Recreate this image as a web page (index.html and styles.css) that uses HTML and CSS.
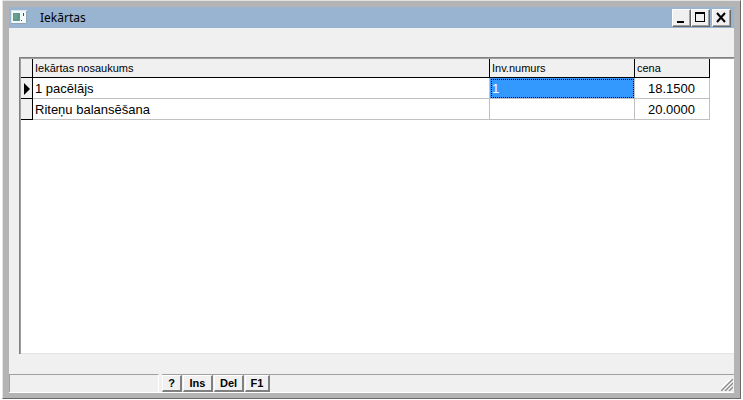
FILE: index.html
```
<!DOCTYPE html>
<html lang="lv">
<head>
    <meta charset="UTF-8">
    <meta name="viewport" content="width=device-width, initial-scale=1.0">
    <title>Iekārtas</title>
    <link rel="stylesheet" href="styles.css">
</head>
<body>
    <main class="window">
        <header class="titlebar">
            <svg class="app-icon" width="16" height="14" viewBox="0 0 16 14" aria-hidden="true">
                <rect x="0.5" y="0.5" width="15" height="13" fill="#f4faf8" stroke="#dce8ee"/>
                <path d="M0 13.5h15.5V1" fill="none" stroke="#8fa5b5"/>
                <rect x="2" y="3" width="7" height="8" fill="#5d9690"/>
                <rect x="3" y="4" width="3" height="5" fill="#6ba38b"/>
                <path d="M12 3h1v3h-1zM10 10h1v1h-1z" fill="#34566c"/>
            </svg>
            <h1>Iekārtas</h1>
            <button type="button" class="win-btn" aria-label="Minimize">
                <svg width="17" height="15" viewBox="0 0 17 15"><path d="M4 11h7v2H4z"/></svg>
            </button>
            <button type="button" class="win-btn" aria-label="Maximize">
                <svg width="17" height="15" viewBox="0 0 17 15"><path fill-rule="evenodd" d="M3 2h10v10H3zM4 4v7h8V4z"/></svg>
            </button>
            <button type="button" class="win-btn close" aria-label="Close">
                <svg width="17" height="15" viewBox="0 0 17 15"><path d="M4 3l8 9M12 3l-8 9" stroke="#000" stroke-width="2"/></svg>
            </button>
        </header>

        <section class="content">
            <table class="grid">
                <colgroup>
                    <col class="col-mark">
                    <col>
                    <col class="col-inv">
                    <col class="col-price">
                </colgroup>
                <thead>
                    <tr>
                        <th class="mark"></th>
                        <th scope="col">Iekārtas nosaukums</th>
                        <th scope="col">Inv.numurs</th>
                        <th scope="col">cena</th>
                    </tr>
                </thead>
                <tbody>
                    <tr>
                        <td class="mark"><svg width="7" height="12" viewBox="0 0 7 12"><path d="M1 0l6 6-6 6z"/></svg></td>
                        <td>1 pacēlājs</td>
                        <td class="selected">1</td>
                        <td class="price">18.1500</td>
                    </tr>
                    <tr>
                        <td class="mark"></td>
                        <td>Riteņu balansēšana</td>
                        <td></td>
                        <td class="price">20.0000</td>
                    </tr>
                </tbody>
            </table>
        </section>

        <footer class="statusbar">
            <div class="status-panel"></div>
            <div class="tools">
                <button type="button" class="help">?</button>
                <button type="button" class="edit">Ins</button>
                <button type="button" class="edit">Del</button>
                <button type="button">F1</button>
            </div>
            <div class="status-rest">
                <svg width="12" height="12" viewBox="0 0 12 12" aria-hidden="true">
                    <path d="M0 11L11 0M4 11l7-7M8 11l3-3" stroke="#fff" stroke-width="3"/>
                    <path d="M0 12L12 0M4 12l8-8M8 12l4-4" stroke="#8c8c8c" stroke-width="1.5"/>
                </svg>
            </div>
        </footer>
    </main>
</body>
</html>
```
FILE: styles.css
```
* { box-sizing: border-box; }
body {
    margin: 0;
    padding: 0 2px 1px;
    height: 100vh;
    display: flex;
    background: #fff;
    font-family: "Liberation Sans", Arial, sans-serif;
    color: #000;
}
button { font-family: inherit; color: #000; padding: 0; }

/* window frame */
.window {
    flex: 1;
    display: flex;
    flex-direction: column;
    padding: 6px 6px 5px;
    background: #b4b4b4;
    border: 1px solid #e3e3e3;
    border-right-color: #696969;
    border-bottom-color: #696969;
}
.titlebar {
    display: flex;
    align-items: center;
    height: 21px;
    padding: 0 3px 0 2px;
    background: #99b4d1;
}
.app-icon { margin-bottom: 2px; }
.titlebar h1 {
    flex: 1;
    margin: 0 0 0 13px;
    font: 12px/18px "Noto Sans", sans-serif;
}
.win-btn {
    width: 19px;
    height: 18px;
    background: #f0f0f0;
    border: 1px solid #fff;
    border-right-color: #696969;
    border-bottom-color: #696969;
    box-shadow: inset -1px -1px #a0a0a0;
}
.win-btn svg { display: block; }
.win-btn.close { margin-left: 2px; }

/* record grid */
.content {
    flex: 1;
    border: solid #f0f0f0;
    border-width: 29px 0 20px 10px;
    background: #fff;
    box-shadow: inset 1px 1px #808080, inset 2px 2px #a0a0a0, inset 0 -1px #e3e3e3;
    padding: 2px 24px 0 2px;
}
.grid {
    width: 100%;
    table-layout: fixed;
    border-collapse: separate;
    border-spacing: 0;
}
.col-mark { width: 12px; }
.col-inv { width: 145px; }
.col-price { width: 75px; }
.grid th {
    height: 19px;
    padding: 0 2px;
    background: #f0f0f0;
    border-right: 1px solid #000;
    border-bottom: 1px solid #000;
    font-size: 11px;
    font-weight: normal;
    line-height: 16px;
    text-align: left;
}
.grid td {
    height: 21px;
    padding: 1px 2px 0;
    border-right: 1px solid #c0c0c0;
    border-bottom: 1px solid #c0c0c0;
    font-size: 13px;
    line-height: 19px;
}
.grid td.mark {
    background: #f0f0f0;
    border-color: #000;
}
.grid .mark svg { display: block; }
.grid td.selected {
    background: #3399ff;
    color: #fff;
    outline: 1px dotted #000;
    outline-offset: -2px;
}
.grid td.price {
    padding-right: 14px;
    text-align: right;
}

/* status bar */
.statusbar {
    display: flex;
    height: 19px;
    background: #f0f0f0;
    border-bottom: 1px solid #fff;
}
.status-panel {
    width: 150px;
    border: 1px solid #a0a0a0;
    border-right-color: #fff;
    border-bottom: 0;
}
.tools {
    display: flex;
    gap: 1px;
    margin-left: 3px;
    border-top: 1px solid #a0a0a0;
}
.tools button {
    width: 25px;
    background: #f0f0f0;
    border: 1px solid #fff;
    border-right: 2px solid #808080;
    border-bottom: 2px solid #808080;
    font-size: 11px;
    font-weight: bold;
    line-height: 14px;
}
.tools .help { width: 20px; }
.tools .edit { width: 30px; }
.status-rest {
    flex: 1;
    display: flex;
    justify-content: flex-end;
    align-items: flex-end;
    padding: 0 1px 1px;
    border-top: 1px solid #a0a0a0;
}
```
